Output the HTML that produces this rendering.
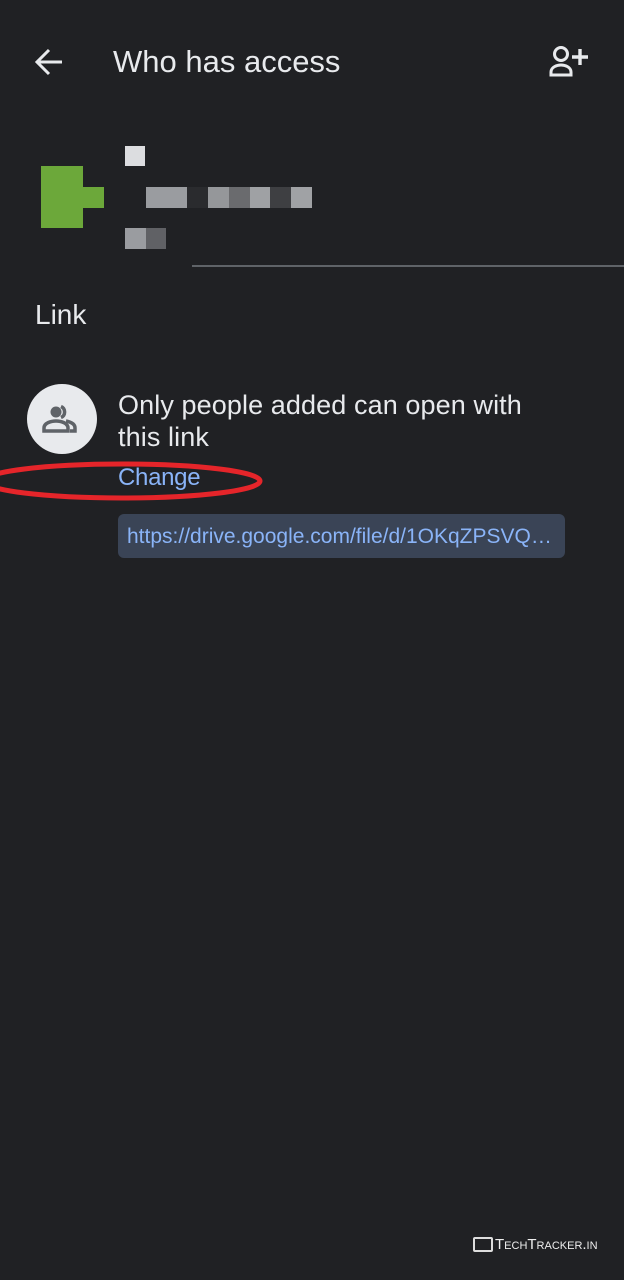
<!DOCTYPE html>
<html><head><meta charset="utf-8"><style>
body{margin:0;width:624px;height:1280px;background:#202124;position:relative;overflow:hidden;font-family:"Liberation Sans",Roboto,sans-serif;color:#e8eaed}
.a{position:absolute}
.b{position:absolute;height:21px}
</style></head><body>
<svg class="a" style="left:33px;top:46px" width="32" height="32" viewBox="0 0 32 32"><path d="M29 16H5M16 4L4 16l12 12" stroke="#e8eaed" stroke-width="3" fill="none"/></svg>
<div class="a" style="left:113px;top:44px;font-size:31px">Who has access</div>
<svg class="a" style="left:548px;top:44px" width="42" height="34" viewBox="0 0 42 34"><circle cx="13" cy="10" r="6.5" stroke="#e8eaed" stroke-width="3" fill="none"/><path d="M3 31v-3c0-5 6-7 10-7s10 2 10 7v3z" stroke="#e8eaed" stroke-width="3" fill="none"/><path d="M32 5v16M24 13h16" stroke="#e8eaed" stroke-width="3.4"/></svg>

<div class="a" style="left:41px;top:166px;width:42px;height:62px;background:#6ca83a"></div>
<div class="a" style="left:83px;top:187px;width:21px;height:21px;background:#6ca83a"></div>
<div class="a" style="left:125px;top:146px;width:20px;height:20px;background:#dcdde0"></div>
<div class="b" style="left:146px;top:187px;width:41px;background:#9a9ca0"></div>
<div class="b" style="left:187px;top:187px;width:21px;background:#2a2b2e"></div>
<div class="b" style="left:208px;top:187px;width:21px;background:#95979a"></div>
<div class="b" style="left:229px;top:187px;width:21px;background:#6a6b6e"></div>
<div class="b" style="left:250px;top:187px;width:20px;background:#9fa1a4"></div>
<div class="b" style="left:270px;top:187px;width:21px;background:#3e3f42"></div>
<div class="b" style="left:291px;top:187px;width:21px;background:#a0a2a5"></div>
<div class="b" style="left:125px;top:228px;width:21px;background:#9a9ca0"></div>
<div class="b" style="left:146px;top:228px;width:20px;background:#606165"></div>
<div class="a" style="left:192px;top:265px;width:432px;height:2px;background:#5f6368"></div>

<div class="a" style="left:35px;top:299px;font-size:28px">Link</div>
<div class="a" style="left:27px;top:384px;width:70px;height:70px;border-radius:50%;background:#e8eaed"></div>
<svg class="a" style="left:42px;top:402px" width="42" height="34" viewBox="0 0 42 34"><circle cx="14" cy="10" r="5.5" fill="#5f6368"/><path d="M19 4.5a6 6 0 0 1 0 11" stroke="#5f6368" stroke-width="3.5" fill="none"/><path d="M2 29v-3c0-5 7-7 12-7s12 2 12 7v3z" stroke="#5f6368" stroke-width="3.5" fill="none"/><path d="M24 19c5 1 9 3 9 7v3h-5" stroke="#5f6368" stroke-width="3.5" fill="none"/></svg>
<div class="a" style="left:118px;top:389px;font-size:27px;line-height:32px;width:480px;letter-spacing:0.1px">Only people added can open with<br>this link</div>
<div class="a" style="left:118px;top:464px;font-size:24px;color:#8ab4f8;letter-spacing:-0.3px">Change</div>
<svg class="a" style="left:0;top:458px" width="270" height="50"><ellipse cx="122" cy="23" rx="138" ry="17" stroke="#e5252a" stroke-width="5" fill="none"/></svg>
<div class="a" style="left:118px;top:514px;width:447px;height:44px;background:#3a4456;border-radius:6px;box-sizing:border-box;padding-left:9px;line-height:46px;font-size:21px;color:#8ab4f8;white-space:nowrap;overflow:hidden">https://drive.google.com/file/d/1OKqZPSVQ…</div>

<div class="a" style="left:473px;top:1237px;width:20px;height:15px;border:2px solid #ddd;box-sizing:border-box;border-radius:2px"></div>
<div class="a" style="left:495px;top:1236px;font-size:15px;color:#eee;font-variant:small-caps">TechTracker.in</div>
</body></html>
